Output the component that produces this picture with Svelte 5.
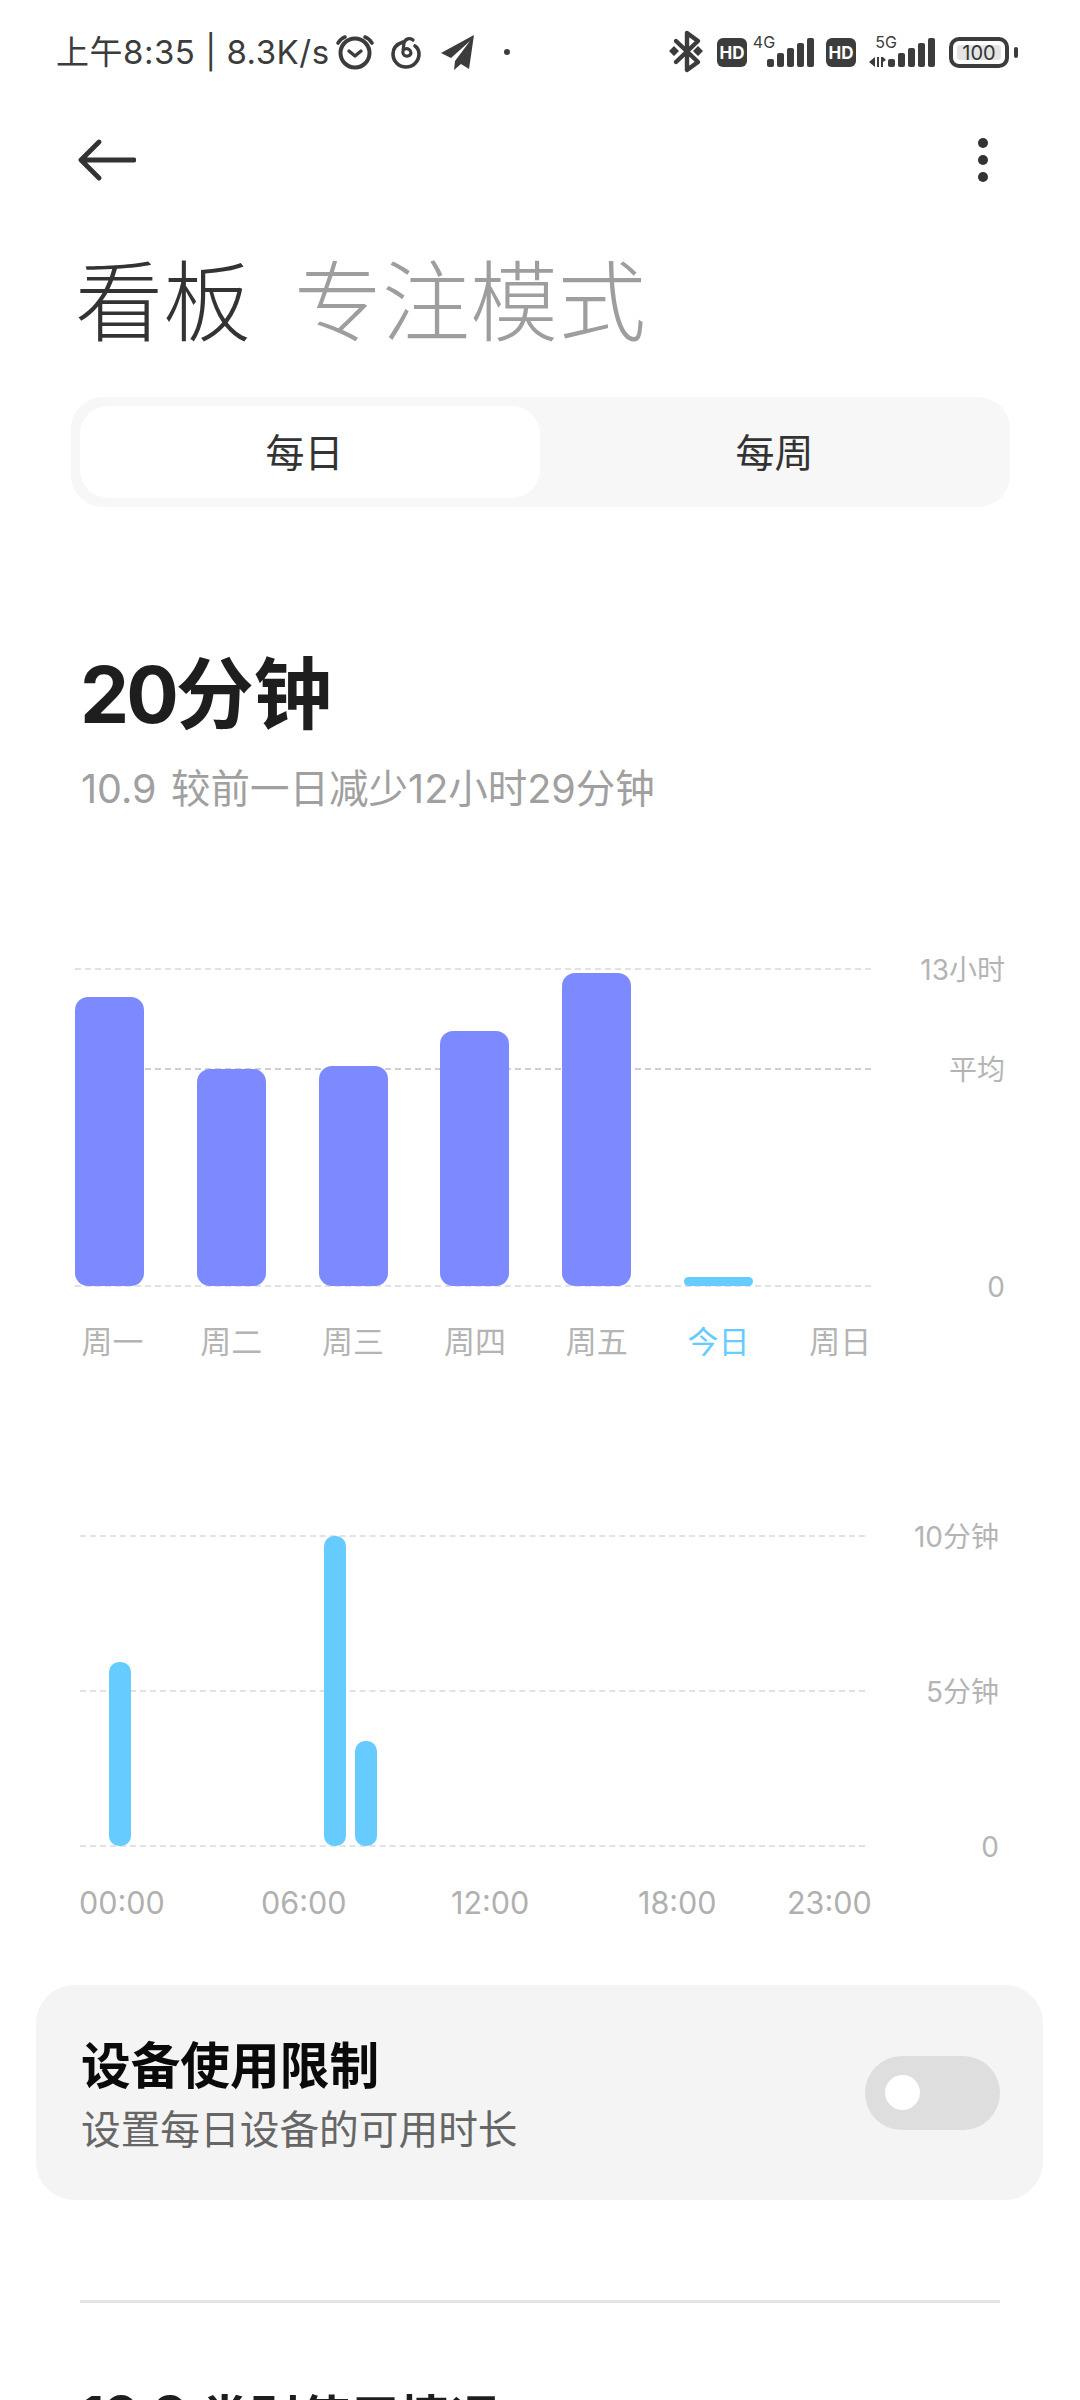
<script>
  const days = [
    { label: '周一', top: 28 },
    { label: '周二', top: 100 },
    { label: '周三', top: 97 },
    { label: '周四', top: 62 },
    { label: '周五', top: 4 },
    { label: '今日', top: 308, today: true },
    { label: '周日', top: null }
  ];
  const weekTicks = [
    { y: 0, text: '13小时' },
    { y: 100, text: '平均', strong: true },
    { y: 317, text: '0' }
  ];
  const hourTicks = [
    { y: 0, text: '10分钟' },
    { y: 155, text: '5分钟' },
    { y: 310, text: '0' }
  ];
  const hourBars = [
    { x: 29, top: 126 },
    { x: 244, top: 0 },
    { x: 275, top: 205 }
  ];
  const times = ['00:00', '06:00', '12:00', '18:00', '23:00'];
  const signal = [
    [0, 8], [10, 14], [20, 19], [30, 24], [40, 29]
  ];
</script>

<div class="page">
  <header class="status">
    <div class="status-left">
      <span class="clock">上午8:35 | 8.3K/s</span>
      <svg class="left-icons" width="180" height="44" viewBox="0 0 180 44" aria-hidden="true">
        <g fill="none" stroke="#3c3c3c" stroke-linecap="round">
          <circle cx="22" cy="23" r="14.5" stroke-width="4"/>
          <path d="M16 21l6 5 6-5" stroke-width="3.4" stroke-linejoin="round"/>
          <path d="M5 13c2-3 4-5 7-6M39 13c-2-3-4-5-7-6" stroke-width="3.6"/>
          <path d="M70 12c-6 2-10 6-10 12a13 13 0 0 0 26 0c0-3-1-6-4-8" stroke-width="3.6"/>
          <path d="M80 10c-3-3-8-1-9 3l-1 8a4 4 0 0 0 8 2c0-3-3-5-6-4" stroke-width="3.2"/>
        </g>
        <path d="M141 5L108 23l10 5 19-17-15 20-1 9 7-6 8 5z" fill="#3c3c3c"/>
        <circle cx="174" cy="22" r="3" fill="#3c3c3c"/>
      </svg>
    </div>
    <svg class="right-icons" width="352" height="44" viewBox="668 30 352 44" aria-hidden="true">
      <g fill="none" stroke="#3c3c3c" stroke-width="4.4" stroke-linejoin="round" stroke-linecap="round">
        <path d="M676 41l22 21-11 8V33l11 8-22 21"/>
      </g>
      <path d="M674 46l5 5-5 5-5-5zM698 46l5 5-5 5-5-5z" fill="#3c3c3c"/>
      <rect x="717" y="38" width="30" height="29" rx="6" fill="#3c3c3c"/>
      <text x="732" y="58.5" class="hd">HD</text>
      <text x="764" y="48" class="net">4G</text>
      <g fill="#3c3c3c">
        {#each signal as [dx, h]}
          <rect x={767 + dx} y={67 - h} width="7" height={h} rx="2"/>
        {/each}
      </g>
      <rect x="826" y="38" width="30" height="29" rx="6" fill="#3c3c3c"/>
      <text x="841" y="58.5" class="hd">HD</text>
      <text x="886" y="48" class="net">5G</text>
      <path d="M875 57v10l-6-5zM877 57h2v10h-2zM881 57v10h2v-5l3-2-3-3z" fill="#3c3c3c"/>
      <g fill="#3c3c3c">
        {#each signal as [dx, h]}
          <rect x={888 + dx} y={67 - h} width="7" height={h} rx="2"/>
        {/each}
      </g>
      <rect x="951" y="39" width="56" height="27" rx="8" fill="none" stroke="#3c3c3c" stroke-width="4"/>
      <rect x="957" y="45" width="44" height="15" rx="3" fill="#e4e4e4"/>
      <text x="979" y="60" class="batt">100</text>
      <rect x="1014" y="47" width="4" height="11" rx="2" fill="#3c3c3c"/>
    </svg>
  </header>

  <nav class="nav">
    <svg width="58" height="44" viewBox="0 0 58 44" aria-hidden="true">
      <path d="M3 22h53M21 4L3 22l18 18" fill="none" stroke="#333" stroke-width="4.8" stroke-linecap="round" stroke-linejoin="round"/>
    </svg>
    <div class="more"><i></i><i></i><i></i></div>
  </nav>

  <div class="title">
    <span class="active">看板</span>
    <span class="inactive">专注模式</span>
  </div>

  <div class="segment">
    <div class="seg-item on">每日</div>
    <div class="seg-item off">每周</div>
  </div>

  <div class="summary"><span class="digits">20</span>分钟</div>
  <div class="compare"><span class="date">10.9</span>较前一日减少12小时29分钟</div>

  <section class="week">
    <div class="plot week-plot">
      {#each weekTicks as t}
        <div class="tick" class:strong={t.strong} style="top:{t.y}px">
          <span class="tick-line"></span>
          <span class="tick-label">{t.text}</span>
        </div>
      {/each}
      <div class="week-bars">
        {#each days as d}
          <div class="week-col">
            {#if d.top !== null}
              <div class="week-bar" class:today={d.today} style="height:{317 - d.top}px"></div>
            {/if}
          </div>
        {/each}
      </div>
    </div>
    <div class="week-labels">
      {#each days as d}
        <span class:today={d.today}>{d.label}</span>
      {/each}
    </div>
  </section>

  <section class="hours">
    <div class="plot hour-plot">
      {#each hourTicks as t}
        <div class="tick" style="top:{t.y}px">
          <span class="tick-line"></span>
          <span class="tick-label">{t.text}</span>
        </div>
      {/each}
      {#each hourBars as b}
        <div class="hour-bar" style="left:{b.x}px;height:{310 - b.top}px"></div>
      {/each}
    </div>
    <div class="time-labels">
      {#each times as t}
        <span>{t}</span>
      {/each}
    </div>
  </section>

  <div class="limit">
    <div class="limit-text">
      <div class="limit-title">设备使用限制</div>
      <div class="limit-sub">设置每日设备的可用时长</div>
    </div>
    <div class="toggle"><span class="knob"></span></div>
  </div>

  <hr class="divider" />

  <div class="cat-row">
    <span class="cat-title"><span class="cat-date">10.9</span>类别使用情况</span>
    <span class="cat-more">详情</span>
  </div>
</div>

<style>
  :global(body) {
    margin: 0;
    background: #fff;
  }
  .page {
    width: 1080px;
    height: 2400px;
    overflow: hidden;
    background: #fff;
    font-family: Inter, "Noto Sans CJK SC", "Noto Sans", sans-serif;
    color: #333;
  }
  .status {
    height: 104px;
    padding: 0 60px 0 56px;
    box-sizing: border-box;
    display: flex;
    justify-content: space-between;
    align-items: center;
  }
  .status-left {
    display: flex;
    align-items: center;
  }
  .clock {
    font-size: 33px;
    letter-spacing: 0.5px;
    color: #3c3c3c;
    line-height: 44px;
    width: 277px;
    white-space: nowrap;
  }
  .left-icons,
  .right-icons {
    display: block;
  }
  .hd {
    font: 700 17px Inter, sans-serif;
    fill: #fff;
    text-anchor: middle;
  }
  .net {
    font: 400 16px Inter, sans-serif;
    fill: #3c3c3c;
    text-anchor: middle;
  }
  .batt {
    font: 400 20px Inter, sans-serif;
    fill: #333;
    text-anchor: middle;
  }
  .nav {
    height: 112px;
    padding: 0 92px 0 78px;
    display: flex;
    justify-content: space-between;
    align-items: center;
  }
  .nav svg {
    display: block;
  }
  .more {
    display: flex;
    flex-direction: column;
    gap: 7px;
  }
  .more i {
    display: block;
    width: 10px;
    height: 10px;
    border-radius: 50%;
    background: #333;
  }
  .title {
    margin-top: 36px;
    height: 99px;
    padding-left: 75px;
    display: flex;
    gap: 43px;
    font-size: 88px;
    line-height: 100px;
    font-weight: 300;
  }
  .active {
    color: #333;
  }
  .inactive {
    color: #9e9e9e;
  }
  .segment {
    margin: 46px 70px 0 71px;
    height: 110px;
    padding: 9px;
    box-sizing: border-box;
    border-radius: 32px;
    background: #f7f7f7;
    display: grid;
    grid-template-columns: 460px 1fr;
  }
  .seg-item {
    display: flex;
    align-items: center;
    justify-content: center;
    font-size: 39px;
    line-height: 50px;
    padding-top: 1px;
    box-sizing: border-box;
    color: #333;
    border-radius: 28px;
  }
  .seg-item.on {
    background: #fff;
    padding-right: 11px;
  }
  .seg-item.off {
    padding-left: 8px;
  }
  .summary {
    margin-top: 138px;
    padding-left: 80px;
    height: 100px;
    font-size: 78px;
    line-height: 100px;
    font-weight: 700;
    color: #1e1e1e;
  }
  .digits {
    letter-spacing: -3px;
  }
  .compare {
    margin-top: 19px;
    padding-left: 81px;
    height: 49px;
    font-size: 39.5px;
    line-height: 50px;
    color: #a0a0a0;
    white-space: nowrap;
  }
  .date {
    margin-right: 14.5px;
  }
  .plot {
    position: relative;
  }
  .tick {
    position: absolute;
    left: 0;
    right: 0;
    height: 0;
    display: flex;
    align-items: center;
  }
  .tick-line {
    flex: 1;
    border-top: 2px dashed #e2e2e2;
  }
  .tick.strong .tick-line {
    border-top-color: #cfcfcf;
  }
  .tick-label {
    width: 134px;
    padding-top: 2px;
    text-align: right;
    font-size: 28px;
    line-height: 38px;
    color: #b4b4b4;
    white-space: nowrap;
  }
  .week {
    margin-top: 156px;
    padding: 0 75px 0 75px;
  }
  .week-plot {
    height: 317px;
  }
  .week-bars {
    position: absolute;
    inset: 0 134px 0 0;
    display: grid;
    grid-template-columns: repeat(7, 69px);
    column-gap: 52.8px;
    align-items: end;
  }
  .week-bar {
    background: #7d8aff;
    border-radius: 13px;
  }
  .week-bar.today {
    background: #66ccff;
    border-radius: 5px;
  }
  .week-labels {
    margin-top: 34px;
    display: grid;
    grid-template-columns: repeat(7, 69px);
    column-gap: 52.8px;
    font-size: 31px;
    line-height: 44px;
    color: #b4b4b4;
    justify-items: center;
  }
  .week-labels span {
    white-space: nowrap;
  }
  .week-labels span:first-child {
    padding-left: 6px;
  }
  .week-labels .today {
    color: #66ccff;
  }
  .hours {
    margin-top: 172px;
    padding: 0 81px 0 79px;
  }
  .hour-plot {
    height: 310px;
    margin-left: 1px;
  }
  .hour-bar {
    position: absolute;
    bottom: 0;
    width: 22px;
    background: #66ccff;
    border-radius: 10px;
  }
  .time-labels {
    margin-top: 35px;
    display: grid;
    grid-template-columns: 182px 190px 187px 149px auto;
    font-size: 30.5px;
    line-height: 44px;
    color: #b0b0b0;
    white-space: nowrap;
  }
  .limit {
    margin: 60px 37px 0 36px;
    height: 215px;
    padding: 0 43px 0 45px;
    border-radius: 38px;
    background: #f4f4f4;
    display: flex;
    align-items: center;
    justify-content: space-between;
  }
  .limit-text {
    padding-top: 5px;
  }
  .limit-title {
    font-size: 49.7px;
    line-height: 64px;
    font-weight: 700;
    color: #0a0a0a;
  }
  .limit-sub {
    font-size: 39.7px;
    line-height: 52px;
    margin-top: 6px;
    color: #666;
    white-space: nowrap;
  }
  .toggle {
    width: 135px;
    height: 74px;
    border-radius: 37px;
    background: #dedede;
    display: flex;
    align-items: center;
    padding-left: 20px;
    box-sizing: border-box;
  }
  .knob {
    width: 35px;
    height: 35px;
    border-radius: 50%;
    background: #fff;
  }
  .divider {
    margin: 100px 80px 0 80px;
    border: 0;
    height: 3px;
    background: #e4e4e4;
  }
  .cat-row {
    margin-top: 82px;
    padding: 0 130px 0 80px;
    display: flex;
    justify-content: space-between;
    align-items: center;
    white-space: nowrap;
  }
  .cat-title {
    font-size: 50px;
    line-height: 64px;
    font-weight: 700;
    color: #1e1e1e;
  }
  .cat-date {
    font-size: 56px;
    letter-spacing: -2px;
    margin-right: 13px;
  }
  .cat-more {
    font-size: 32px;
    color: #8a8a9a;
  }
</style>
